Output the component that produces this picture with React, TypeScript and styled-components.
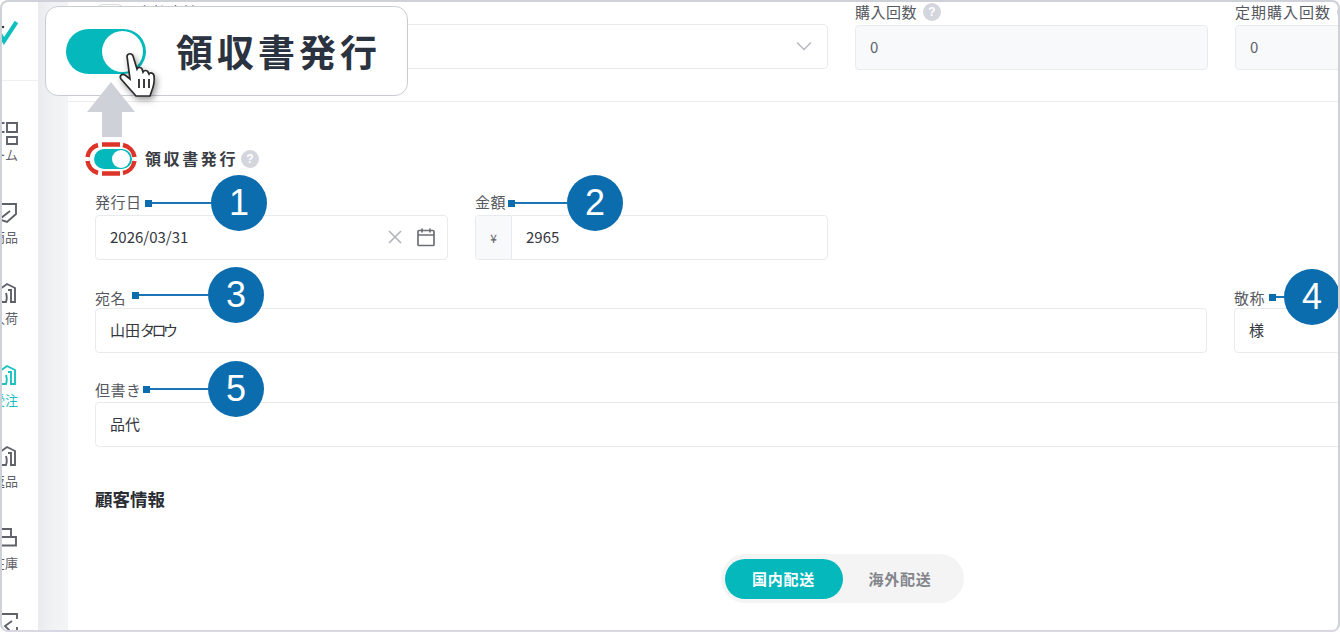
import React from "react";
import styled, { createGlobalStyle } from "styled-components";

const Global = createGlobalStyle`
  html, body { margin: 0; padding: 0; background: #fff; }
  #root { width: 1340px; height: 634px; overflow: hidden; }
  * { box-sizing: border-box; }
`;

const FONT = `"Noto Sans CJK JP", "Noto Sans", sans-serif`;

const Frame = styled.div`
  position: relative;
  width: 1340px;
  height: 632px;
  border: 2px solid #ced1d8;
  border-bottom-color: #d9d8e2;
  border-radius: 8px;
  overflow: hidden;
  display: flex;
  background: #fff;
  font-family: ${FONT};
  color: #4b4f58;
`;

const Sidebar = styled.aside`
  width: 36px;
  flex: none;
  overflow: hidden;
  display: flex;
  flex-direction: column;
`;

const LogoBox = styled.div`
  height: 79px;
  flex: none;
  display: flex;
  padding-top: 19px;
  border-bottom: 1px solid #eceef1;
`;

const NavList = styled.div`
  display: flex;
  flex-direction: column;
  padding-top: 38px;
  gap: 35.6px;
`;

const NavItem = styled.div<{ $active?: boolean }>`
  height: 46px;
  width: 36px;
  display: flex;
  flex-direction: column;
  align-items: flex-end;
  color: ${(p) => (p.$active ? "#1cc0c0" : "#5e6168")};
  padding-right: 21px;
  svg { flex: none; overflow: visible; margin-right: 0; }
`;

const NavLabel = styled.span`
  font-size: 13px;
  line-height: 16px;
  margin-top: 4px;
  margin-right: -1px;
  white-space: nowrap;
`;

const Gutter = styled.div`
  width: 30px;
  flex: none;
  background: linear-gradient(90deg, #e9ebee 0, #f1f2f4 50%, #f3f4f6 100%);
`;

const Main = styled.main`
  flex: none;
  width: 1300px;
  padding: 0 0 0 27px;
  display: flex;
  flex-direction: column;
`;

const TopRow = styled.div`
  display: grid;
  grid-template-columns: repeat(4, 353px);
  gap: 27px;
  height: 100px;
  border-bottom: 1px solid #e9ebee;
  margin-left: -27px;
  padding-left: 27px;
  align-items: start;
`;

const Field = styled.div<{ $span?: number }>`
  display: flex;
  flex-direction: column;
  min-width: 0;
  grid-column: span ${(p) => p.$span ?? 1};
`;

const Label = styled.div<{ $h?: number; $pb?: number; $ls?: number }>`
  height: ${(p) => p.$h ?? 22}px;
  padding-bottom: ${(p) => p.$pb ?? 0}px;
  font-size: 15px;
  letter-spacing: ${(p) => p.$ls ?? 0.5}px;
  line-height: 20px;
  color: #555860;
  display: flex;
  align-items: center;
  gap: 6px;
  white-space: nowrap;
`;

const LabelPill = styled.span`
  width: 30px;
  height: 16px;
  border-radius: 8px;
  border: 1px solid #d8dade;
  margin-right: 6px;
  flex: none;
`;

const InputBox = styled.div<{ $disabled?: boolean; $end?: boolean }>`
  height: 45px;
  margin-top: ${(p) => (p.$disabled ? 1 : 0)}px;
  border: 1px solid #e8eaed;
  border-radius: 4px;
  background: ${(p) => (p.$disabled ? "#f8f9fb" : "#fff")};
  display: flex;
  align-items: center;
  justify-content: ${(p) => (p.$end ? "flex-end" : "flex-start")};
  padding: 0 14px 2px;
  font-size: 15px;
  color: ${(p) => (p.$disabled ? "#5e6168" : "#33363c")};
  gap: 8px;
`;

const Grow = styled.span`
  flex: 1;
  min-width: 0;
`;

const Kana = styled.span`
  letter-spacing: -3.5px;
`;

const CalendarIcon = styled.svg`
  margin: 0 -3px 0 5px;
  flex: none;
`;

const HelpDot = styled.span`
  width: 18px;
  height: 18px;
  border-radius: 50%;
  background: #d3d6dc;
  color: #fff;
  font: 700 12px/18px "Liberation Sans", sans-serif;
  letter-spacing: 0;
  text-align: center;
  flex: none;
`;

const Switch = styled.span`
  display: block;
  width: 38px;
  height: 20px;
  border-radius: 10px;
  background: #04b8bc;
  position: relative;
  flex: none;
  &::after {
    content: "";
    position: absolute;
    right: 2px;
    top: 1px;
    width: 18px;
    height: 18px;
    border-radius: 50%;
    background: #fff;
  }
`;

const BigSwitch = styled(Switch)`
  width: 80px;
  height: 45px;
  border-radius: 23px;
  &::after {
    width: 41px;
    height: 41px;
    top: 2px;
    right: 3px;
  }
`;

const ReceiptRow = styled.div`
  height: 38px;
  margin-top: 38px;
  display: flex;
  align-items: center;
  margin-left: -1px;
  font-size: 16px;
  letter-spacing: 2.6px;
  font-weight: 700;
  color: #3a3d44;
`;

const ReceiptText = styled.span`
  margin: -3px 3px 0 13px;
`;

const FormRow = styled.div<{ $cols: string; $mt: number }>`
  display: grid;
  grid-template-columns: ${(p) => p.$cols};
  column-gap: 27px;
  margin-top: ${(p) => p.$mt}px;
`;

const Addon = styled.span`
  width: 36px;
  align-self: stretch;
  margin: 0 6px -2px -14px;
  background: #f8f9fb;
  border-right: 1px solid #e8eaed;
  border-radius: 4px 0 0 4px;
  display: flex;
  align-items: center;
  justify-content: center;
  font-size: 12px;
  color: #5e6168;
`;

const SectionTitle = styled.h2`
  margin: 41px 0 0;
  font-size: 17.5px;
  line-height: 22px;
  font-weight: 700;
  color: #2a2d33;
`;

const SegmentWrap = styled.div`
  display: flex;
  justify-content: center;
  margin-top: 44px;
  margin-left: -27px;
  width: 1548px;
  flex: none;
`;

const Segment = styled.div`
  width: 243px;
  height: 49px;
  padding: 4px;
  border-radius: 25px;
  background: #f4f4f5;
  display: flex;
  align-items: center;
`;

const SegButton = styled.div<{ $active?: boolean }>`
  width: ${(p) => (p.$active ? 118 : 115)}px;
  height: 40px;
  border-radius: 20px;
  background: ${(p) => (p.$active ? "#04b8bc" : "transparent")};
  color: ${(p) => (p.$active ? "#fff" : "#83858b")};
  display: flex;
  align-items: center;
  justify-content: center;
  font-size: 15px;
  letter-spacing: 0.7px;
  font-weight: 700;
`;

/* ---- overlays ---- */
const Popup = styled.div`
  position: absolute;
  left: 43px;
  top: 4px;
  width: 363px;
  height: 90px;
  background: #fff;
  border: 1px solid #c9ccd3;
  border-radius: 13px;
  display: flex;
  align-items: center;
  padding: 0 0 0 20px;
  gap: 30px;
  font-size: 37px;
  font-weight: 700;
  letter-spacing: 4px;
  color: #2b3240;
`;

const Hand = styled.svg`
  position: absolute;
  left: 116px;
  top: 48px;
  filter: drop-shadow(2px 3px 3px rgba(0,0,0,.4));
`;

const UpArrow = styled.svg`
  position: absolute;
  left: 85px;
  top: 79px;
`;

const Dashed = styled.svg`
  position: absolute;
  left: 82px;
  top: 139px;
`;

const Callout = styled.div<{ $x: number; $y: number }>`
  position: absolute;
  left: ${(p) => p.$x}px;
  top: ${(p) => p.$y}px;
  display: flex;
  align-items: center;
  height: 56px;
`;

const Pin = styled.span`
  width: 7px;
  height: 7px;
  background: #0b6cae;
  flex: none;
`;

const Leader = styled.span<{ $w: number }>`
  width: ${(p) => p.$w}px;
  height: 2px;
  background: #1a74b5;
  flex: none;
`;

const Badge = styled.span`
  width: 56px;
  height: 56px;
  border-radius: 50%;
  background: #0b6cae;
  color: #fff;
  font: 400 36px/56px "Liberation Sans", Arial, sans-serif;
  text-align: center;
  flex: none;
`;

const CalloutMark = ({ x, y, w, n }: { x: number; y: number; w: number; n: number }) => (
  <Callout $x={x} $y={y}>
    <Pin />
    <Leader $w={w} />
    <Badge>{n}</Badge>
  </Callout>
);

const housePath = "M-6 10L5 2l8 4v14H9V8H6M-1 20H4c1-3 1-6 0-9";

const icons: React.ReactNode[] = [
  <path key="a" d="M5 4h10v9H5zM5 18h10v7H5zM-8 4H2.5M-8 13H2.5" />,
  <path key="b" d="M-3 3H14V13L5 21l-9-3M-1 17L8 10" />,
  <path key="c" d={housePath} />,
  <path key="d" d={housePath} />,
  <path key="e" d={housePath} />,
  <path key="f" d="M-2 2H9V10H-2zM-6 18.5H14V10H9" />,
  <path key="g" d="M-4 5H15V10M10 12L3 17l6 6M15 18V26" />,
];

const nav = [
  { label: "ホーム", active: false },
  { label: "商品", active: false },
  { label: "入荷", active: false },
  { label: "受注", active: true },
  { label: "返品", active: false },
  { label: "在庫", active: false },
  { label: "分析", active: false },
];

const NavIcon = ({ i }: { i: number }) => (
  <svg width="15" height="24" viewBox="0 0 15 24" fill="none" stroke="currentColor" strokeWidth="1.9">
    {icons[i]}
  </svg>
);

export default function App() {
  return (
    <>
      <Global />
      <Frame>
        <Sidebar>
          <LogoBox>
            <svg width="16" height="24" viewBox="0 0 16 24" fill="none">
              <path d="M-2 13L2 20 14.5 1" stroke="#0cc0c0" strokeWidth="4.2" />
              <circle cx="1" cy="6" r="1.2" fill="#333" />
            </svg>
          </LogoBox>
          <NavList>
            {nav.map((n, i) => (
              <NavItem key={n.label} $active={n.active}>
                <NavIcon i={i} />
                <NavLabel>{n.label}</NavLabel>
              </NavItem>
            ))}
          </NavList>
        </Sidebar>
        <Gutter />
        <Main>
          <TopRow>
            <Field $span={2}>
              <Label $pb={3}>
                <LabelPill />
                支払方法
              </Label>
              <InputBox $end>
                <svg width="18" height="18" viewBox="0 0 18 18" fill="none" stroke="#b4b7bd" strokeWidth="1.4">
                  <path d="M2 5.5l7 7 7-7" />
                </svg>
              </InputBox>
            </Field>
            <Field>
              <Label $pb={3}>
                購入回数
                <HelpDot>?</HelpDot>
              </Label>
              <InputBox $disabled>0</InputBox>
            </Field>
            <Field>
              <Label $pb={3} $ls={1}>
                定期購入回数
                <HelpDot>?</HelpDot>
              </Label>
              <InputBox $disabled>0</InputBox>
            </Field>
          </TopRow>

          <ReceiptRow>
            <Switch />
            <ReceiptText>領収書発行</ReceiptText>
            <HelpDot>?</HelpDot>
          </ReceiptRow>

          <FormRow $cols="353px 353px" $mt={11}>
            <Field>
              <Label $h={26}>発行日</Label>
              <InputBox>
                <Grow>2026/03/31</Grow>
                <svg width="16" height="16" viewBox="0 0 16 16" fill="none" stroke="#b0b3b9" strokeWidth="1.6">
                  <path d="M2 2l12 12M14 2L2 14" />
                </svg>
                <CalendarIcon width="20" height="20" viewBox="0 0 20 20" fill="none" stroke="#6c6f76" strokeWidth="1.7">
                  <rect x="2" y="3.5" width="16" height="15" rx="1" />
                  <path d="M2 8h16M6 1.5v4M14 1.5v4" />
                </CalendarIcon>
              </InputBox>
            </Field>
            <Field>
              <Label $h={26}>金額</Label>
              <InputBox>
                <Addon>¥</Addon>
                2965
              </InputBox>
            </Field>
          </FormRow>

          <FormRow $cols="1112px 353px" $mt={28}>
            <Field>
              <Label $h={20}>宛名</Label>
              <InputBox>
                <span>
                  山田<Kana>タロウ</Kana>
                </span>
              </InputBox>
            </Field>
            <Field>
              <Label $h={20}>敬称</Label>
              <InputBox>様</InputBox>
            </Field>
          </FormRow>

          <FormRow $cols="1300px" $mt={25}>
            <Field>
              <Label $h={24}>但書き</Label>
              <InputBox>品代</InputBox>
            </Field>
          </FormRow>

          <SectionTitle>顧客情報</SectionTitle>

          <SegmentWrap>
            <Segment>
              <SegButton $active>国内配送</SegButton>
              <SegButton>海外配送</SegButton>
            </Segment>
          </SegmentWrap>
        </Main>

        <Popup>
          <BigSwitch />
          領収書発行
        </Popup>
        <UpArrow width="48" height="56" viewBox="0 0 48 56">
          <path d="M24 1L48 31H35V56H15V31H0Z" fill="#ced1d8" />
        </UpArrow>
        <Hand width="44" height="50" viewBox="0 0 44 50">
          <path
            d="M9 6c1-3 5-3 6 0l4 13c1-2 4-2 5 0l1 3c1-2 4-2 5 0l1 2c1-2 5-1 5 2 1 6-1 12-3 17l-1 3H18L3 29c-2-3 1-6 4-4l5 4L9 6z"
            fill="#fff"
            stroke="#2a2a2a"
            strokeWidth="1.7"
          />
          <path d="M21 29v9M26 29v9M31 29v9" stroke="#2a2a2a" strokeWidth="1.8" />
        </Hand>
        <Dashed width="54" height="36" viewBox="0 0 54 36" fill="none" stroke="#dc3428" strokeWidth="4.5">
          <path d="M18 3.5H36M18 32.5H36M14 4A14.5 14.5 0 0 0 3.5 16M3.5 20A14.5 14.5 0 0 0 14 32M39 4A14.5 14.5 0 0 1 50.5 16M50.5 20A14.5 14.5 0 0 1 39 32" />
        </Dashed>

        <CalloutMark x={143} y={173} w={59} n={1} />
        <CalloutMark x={506} y={173} w={52} n={2} />
        <CalloutMark x={130} y={265} w={69} n={3} />
        <CalloutMark x={1267} y={267} w={8} n={4} />
        <CalloutMark x={141} y={359} w={58} n={5} />
      </Frame>
    </>
  );
}
